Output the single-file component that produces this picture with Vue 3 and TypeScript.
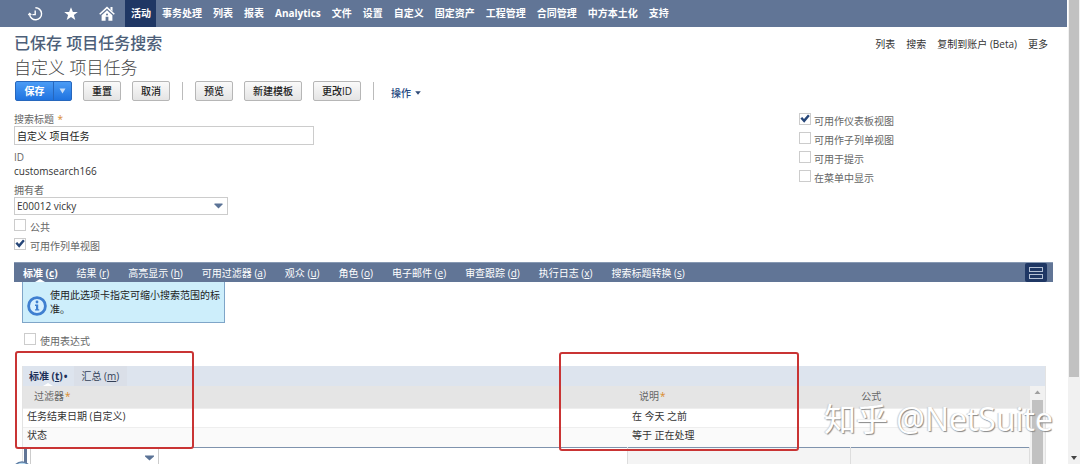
<script setup lang="ts">
import { ref } from 'vue'

interface Flag { id: string; label: string; checked: boolean }
interface Tab { label: string; key: string }
interface Filter { name: string; description: string; formula: string }

const menu: string[] = ['活动', '事务处理', '列表', '报表', 'Analytics', '文件', '设置', '自定义', '固定资产', '工程管理', '合同管理', '中方本土化', '支持']
const activeMenu = ref('活动')
const pageLinks: string[] = ['列表', '搜索', '复制到账户 (Beta)', '更多']

const title = ref('自定义 项目任务')
const owner = ref('E00012 vicky')
const newFilter = ref('')

const leftFlags = ref<Flag[]>([
  { id: 'public', label: '公共', checked: false },
  { id: 'listview', label: '可用作列单视图', checked: true },
])
const rightFlags = ref<Flag[]>([
  { id: 'dashboard', label: '可用作仪表板视图', checked: true },
  { id: 'sublist', label: '可用作子列单视图', checked: false },
  { id: 'reminder', label: '可用于提示', checked: false },
  { id: 'inmenu', label: '在菜单中显示', checked: false },
])
const useExpression = ref(false)

const tabs: Tab[] = [
  { label: '标准', key: 'c' },
  { label: '结果', key: 'r' },
  { label: '高亮显示', key: 'h' },
  { label: '可用过滤器', key: 'a' },
  { label: '观众', key: 'u' },
  { label: '角色', key: 'o' },
  { label: '电子邮件', key: 'e' },
  { label: '审查跟踪', key: 'd' },
  { label: '执行日志', key: 'x' },
  { label: '搜索标题转换', key: 's' },
]
const activeTab = ref('c')

const filters: Filter[] = [
  { name: '任务结束日期 (自定义)', description: '在 今天 之前', formula: '' },
  { name: '状态', description: '等于 正在处理', formula: '' },
]
</script>

<template>
  <div class="shell">
    <main class="page">
      <nav class="menubar">
        <a class="menu-icon" href="#" aria-label="recent">
          <svg width="16" height="16" viewBox="0 0 16 16" fill="none" stroke="#fff" stroke-width="1.4">
            <path d="M8.4 1.8A6 6 0 1 1 2.6 8.4" />
            <path d="M8.2 4.4V8.6H5.4" />
            <path d="M1.4 9.2L2.6 7.4L4.4 8.8" />
          </svg>
        </a>
        <a class="menu-icon" href="#" aria-label="favorites">
          <svg width="16" height="16" viewBox="0 0 16 16" fill="#fff">
            <path d="M8 1.2L9.9 6H14.8L10.9 9.1L12.3 14L8 11.1L3.7 14L5.1 9.1L1.2 6H6.1Z" />
          </svg>
        </a>
        <a class="menu-icon" href="#" aria-label="home">
          <svg width="16" height="16" viewBox="0 0 16 16">
            <path d="M0.7 8.2L8 1.6L15.3 8.2" fill="none" stroke="#fff" stroke-width="1.5" />
            <path d="M11.5 1H13.5V5.4L11.5 3.6Z" fill="#fff" />
            <path d="M2.6 9.2L8 4.3L13.4 9.2V14.8H9.4V10.8H6.6V14.8H2.6Z" fill="#fff" />
            <circle cx="8" cy="8.4" r="1" fill="#617596" />
          </svg>
        </a>
        <a
          v-for="m in menu"
          :key="m"
          href="#"
          class="menu-item"
          :class="{ active: m === activeMenu }"
          @click.prevent="activeMenu = m"
        >{{ m }}</a>
      </nav>

      <header class="heading">
        <div>
          <h1>已保存 项目任务搜索</h1>
          <h2>自定义 项目任务</h2>
        </div>
        <div class="page-links">
          <a v-for="l in pageLinks" :key="l" href="#">{{ l }}</a>
        </div>
      </header>

      <div class="toolbar">
        <div class="split">
          <button type="button" class="save">保存</button>
          <button type="button" class="save-more" aria-label="more">
            <svg width="7" height="6" viewBox="0 0 7 6"><path d="M0.5 0.5H6.5L3.5 5.5Z" fill="#c6ddf8" /></svg>
          </button>
        </div>
        <button type="button" class="btn">重置</button>
        <button type="button" class="btn">取消</button>
        <span class="divider"></span>
        <button type="button" class="btn">预览</button>
        <button type="button" class="btn">新建模板</button>
        <button type="button" class="btn">更改ID</button>
        <span class="divider"></span>
        <button type="button" class="actions">
          操作
          <svg width="6" height="4" viewBox="0 0 6 4"><path d="M0.2 0.3H5.8L3 3.8Z" fill="#2f4b78" /></svg>
        </button>
      </div>

      <section class="form">
        <div class="col">
          <label class="caption" for="title">搜索标题 <span class="req">*</span></label>
          <input id="title" v-model="title" class="text-input" type="text">
          <span class="caption id-caption">ID</span>
          <span class="value">customsearch166</span>
          <label class="caption" for="owner">拥有者</label>
          <div class="select-box">
            <select id="owner" v-model="owner">
              <option>E00012 vicky</option>
            </select>
            <svg class="caret" width="9" height="6" viewBox="0 0 9 6"><path d="M0.5 0.5H8.5V1.5L4.5 5.5L0.5 1.5Z" fill="#5b7396" /></svg>
          </div>
          <div class="left-flags">
            <div v-for="f in leftFlags" :key="f.id" class="flag">
              <input :id="f.id" v-model="f.checked" type="checkbox">
              <label :for="f.id">{{ f.label }}</label>
            </div>
          </div>
        </div>
        <div class="col">
          <div v-for="f in rightFlags" :key="f.id" class="flag">
            <input :id="f.id" v-model="f.checked" type="checkbox">
            <label :for="f.id">{{ f.label }}</label>
          </div>
        </div>
      </section>

      <div class="tabbar">
        <button
          v-for="t in tabs"
          :key="t.key"
          type="button"
          class="tab"
          :class="{ active: t.key === activeTab }"
          @click="activeTab = t.key"
        >{{ t.label }} (<u>{{ t.key }}</u>)</button>
        <button type="button" class="layout-btn" aria-label="layout">
          <svg width="14" height="12" viewBox="0 0 14 12" fill="none" stroke="#b4c0d4" stroke-width="1">
            <rect x="0.5" y="0.5" width="13" height="4" />
            <rect x="0.5" y="7.5" width="13" height="4" />
          </svg>
        </button>
      </div>

      <section class="criteria">
        <div class="hint">
          <svg width="20" height="20" viewBox="0 0 20 20">
            <circle cx="10" cy="10" r="8.4" fill="#d6efff" stroke="#3f7fd0" stroke-width="2.8" />
            <circle cx="10" cy="6" r="1.4" fill="#3f7fd0" />
            <path d="M8 8.6H11.2V13.2H12.2V14.6H8V13.2H9V10H8Z" fill="#3f7fd0" />
          </svg>
          <p>使用此选项卡指定可缩小搜索范围的标准。</p>
        </div>
        <div class="flag expr">
          <input id="expr" v-model="useExpression" type="checkbox">
          <label for="expr">使用表达式</label>
        </div>

        <div class="panel">
          <div class="subtabs">
            <button type="button" class="subtab active">标准 (<u>t</u>)<span class="dot">•</span></button>
            <button type="button" class="subtab">汇总 (<u>m</u>)</button>
          </div>
          <div class="grid-area">
            <table>
              <colgroup>
                <col class="c-name">
                <col class="c-desc">
                <col>
              </colgroup>
              <thead>
                <tr>
                  <th>过滤器<span class="req">*</span></th>
                  <th>说明<span class="req">*</span></th>
                  <th>公式</th>
                </tr>
              </thead>
              <tbody>
                <tr v-for="f in filters" :key="f.name">
                  <td>{{ f.name }}</td>
                  <td>{{ f.description }}</td>
                  <td>{{ f.formula }}</td>
                </tr>
                <tr class="edit">
                  <td>
                    <div class="select-box new-filter">
                      <select v-model="newFilter" aria-label="过滤器">
                        <option value=""></option>
                      </select>
                      <svg class="caret" width="9" height="6" viewBox="0 0 9 6"><path d="M0 0.5H9V1.5L4.5 5.5L0 1.5Z" fill="#5b7396" /></svg>
                    </div>
                    <svg class="row-handle" width="20" height="20" viewBox="0 0 20 20"><circle cx="10" cy="10" r="9" fill="#b9dcf2" stroke="#5f7da3" stroke-width="1.5" /></svg>
                  </td>
                  <td></td>
                  <td></td>
                </tr>
              </tbody>
            </table>
            <div class="grid-scroll">
              <svg width="7" height="4" viewBox="0 0 7 4"><path d="M0.5 4L3.5 0.5L6.5 4Z" fill="#a0a0a0" /></svg>
              <div class="grid-thumb"></div>
            </div>
          </div>
        </div>
        <div class="mark mark-left"></div>
        <div class="mark mark-right"></div>
        <div class="watermark">知乎 @NetSuite</div>
      </section>
    </main>

    <div class="scrollbar">
      <div class="thumb"></div>
      <svg width="6" height="4" viewBox="0 0 6 4"><path d="M0 0H6L3 4Z" fill="#444" /></svg>
    </div>
  </div>
</template>

<style>
body {
  margin: 0;
  background: #fff;
}
</style>

<style scoped>
.shell {
  display: flex;
  height: 100vh;
  overflow: hidden;
  font-family: "Open Sans", "Noto Sans CJK SC", sans-serif;
  font-size: 10px;
  line-height: 14px;
  color: #333;
}
.shell * {
  box-sizing: border-box;
}
button, input, select {
  font: inherit;
  margin: 0;
}
button {
  padding: 0;
  border: 0;
  background: none;
  white-space: nowrap;
}
a {
  color: inherit;
  text-decoration: none;
}
svg {
  display: block;
}
.page {
  flex: 1;
  min-width: 0;
}
.scrollbar {
  flex: 0 0 12px;
  display: flex;
  flex-direction: column;
  align-items: center;
  justify-content: space-between;
  padding-bottom: 4px;
  background: #f1f1f1;
}
.thumb {
  width: 10px;
  height: 82%;
  background: #c1c1c1;
}

.menubar {
  display: flex;
  height: 27px;
  margin-right: 1px;
  padding-left: 17px;
  background: #617596;
  color: #fff;
  font-weight: 700;
}
.menu-icon {
  display: flex;
  align-items: center;
  justify-content: center;
  width: 36px;
}
.menu-item {
  padding: 0 5px 0 6px;
  line-height: 26px;
  white-space: nowrap;
}
.menu-item.active {
  background: #1f3764;
}

.heading {
  display: flex;
  justify-content: space-between;
  padding: 4px 20px 0 14px;
}
h1, h2 {
  margin: 0;
}
h1 {
  font-size: 16px;
  line-height: 24px;
  font-weight: 500;
  color: #4d5f79;
}
h2 {
  font-size: 17px;
  line-height: 26px;
  font-weight: 300;
  color: #444;
}
.page-links {
  display: flex;
  gap: 11px;
  padding-top: 6px;
}

.toolbar {
  display: flex;
  align-items: center;
  gap: 11px;
  padding: 0 15px;
}
.btn {
  height: 20px;
  padding: 0 8px;
  border: 1px solid #b6b6b6;
  border-radius: 2px;
  background: linear-gradient(#fafafa, #e4e4e4);
  color: #222;
  font-weight: 500;
}
.split {
  display: flex;
  height: 20px;
  border: 1px solid #2767bd;
  border-radius: 2px;
  background: linear-gradient(#4a9bf5, #1f73e0);
}
.save {
  width: 37px;
  color: #fff;
  font-weight: 700;
}
.save-more {
  display: flex;
  align-items: center;
  justify-content: center;
  width: 18px;
  border-left: 1px solid #2767bd;
}
.divider {
  width: 1px;
  height: 18px;
  margin: 0 1px;
  background: #bbb;
}
.actions {
  display: flex;
  align-items: center;
  gap: 4px;
  padding: 4px 0 0 5px;
  color: #24477f;
  font-weight: 500;
}

.form {
  display: grid;
  grid-template-columns: 785fr 269fr;
  padding: 11px 0 6px 14px;
}
.col {
  display: flex;
  flex-direction: column;
  align-items: flex-start;
}
.caption {
  color: #666;
}
.req {
  margin-left: 1px;
  color: #d98b2b;
}
.text-input {
  width: 300px;
  height: 19px;
  padding: 0 2px;
  border: 1px solid #ccc;
  color: #222;
}
.id-caption {
  margin-top: 5px;
}
.value {
  margin-bottom: 5px;
}
.select-box {
  position: relative;
  width: 214px;
}
select {
  display: block;
  width: 100%;
  height: 18px;
  padding: 0 2px;
  border: 1px solid #ccc;
  border-radius: 0;
  appearance: none;
  background: #fff;
  color: #333;
}
.caret {
  position: absolute;
  right: 5px;
  top: 6px;
  pointer-events: none;
}
.left-flags {
  padding-top: 3px;
}
.left-flags .flag {
  gap: 4px;
}
.flag {
  display: flex;
  align-items: flex-start;
  gap: 3px;
  height: 19px;
  color: #666;
}
.flag label {
  padding-top: 2px;
}
input[type="checkbox"] {
  appearance: none;
  width: 12px;
  height: 12px;
  margin-top: 1px;
  border: 1px solid #ccc;
  background: #fff;
}
input[type="checkbox"]:checked::before {
  content: "";
  display: block;
  width: 10px;
  height: 10px;
  background: #274779;
  clip-path: polygon(4% 44%, 22% 30%, 40% 50%, 80% 6%, 98% 20%, 42% 88%);
}

.tabbar {
  display: flex;
  align-items: center;
  gap: 19px;
  height: 20px;
  margin: 0 15px 0 14px;
  padding: 0 6px 0 9px;
  border-top: 1px solid #8799b3;
  background: #617596;
}
.tab {
  position: relative;
  height: 100%;
  color: #fff;
}
.tab.active {
  font-weight: 700;
}
.tab.active::after,
.subtab.active::after {
  content: "";
  position: absolute;
  left: 50%;
  bottom: 0;
  margin-left: -5px;
  border: 5px solid transparent;
  border-top: 0;
  border-bottom: 3px solid #fff;
}
.layout-btn {
  display: flex;
  align-items: center;
  justify-content: center;
  width: 22px;
  height: 19px;
  margin-left: auto;
  border-radius: 2px;
  background: #1f3764;
}

.criteria {
  position: relative;
  padding: 0 22px;
}
.hint {
  display: flex;
  align-items: flex-start;
  gap: 3px;
  width: 203px;
  height: 41px;
  padding: 6px 2px 0 4px;
  border: 1px solid #7fa5c8;
  border-top: 0;
  background: #cdeefb;
  color: #222;
}
.hint svg {
  flex: none;
  margin-top: 8px;
}
.hint p {
  margin: 0;
}
.expr {
  padding: 9px 0 0 2px;
  height: 43px;
  gap: 4px;
}
.panel {
  border-right: 1px solid #e3e3e3;
  border-left: 1px solid #e3e3e3;
}
.subtabs {
  display: flex;
  height: 20px;
  background: #dde4ee;
  color: #333f57;
}
.subtab {
  position: relative;
  height: 100%;
  padding: 0 6px;
  color: inherit;
}
.subtab + .subtab {
  padding: 0 8px;
  background: #dadfe8;
}
.subtab.active {
  color: #1c3058;
  font-weight: 700;
}
.dot {
  margin-left: 1px;
}
.grid-area {
  display: flex;
}
table {
  flex: 1;
  border-collapse: collapse;
  table-layout: fixed;
}
.c-name {
  width: 60.1%;
}
.c-desc {
  width: 22.1%;
}
th {
  height: 22px;
  padding: 0 11px 2px;
  background: #e5e5e5;
  color: #666;
  font-weight: 400;
  text-align: left;
}
td {
  height: 19px;
  padding: 0 4px 4px;
  border-top: 1px solid #eee;
}
tbody tr:nth-child(2) td {
  height: 20px;
  background: #fafafa;
}
.edit td {
  position: relative;
  height: 24px;
  padding: 0 0 0 7px;
  border-top: 1px solid #7f93ad;
  border-right: 1px solid #ddd;
  background: #f4f4f4;
}
.edit td:first-child {
  background: linear-gradient(to right, #fff 1px, #617596 1px, #617596 4px, #fff 4px);
}
.new-filter {
  width: 129px;
}
.new-filter select {
  height: 24px;
  border-top: 0;
}
.new-filter .caret {
  top: 7px;
}
.row-handle {
  position: absolute;
  left: -11px;
  top: 13px;
}
.grid-scroll {
  display: flex;
  flex-direction: column;
  align-items: center;
  gap: 6px;
  width: 15px;
  padding-top: 4px;
  background: #f1f1f1;
}
.grid-thumb {
  flex: 1;
  width: 11px;
  background: #c1c1c1;
}
.mark {
  position: absolute;
  border: 2px solid #c93434;
  border-radius: 3px;
  pointer-events: none;
}
.mark-left {
  left: 15px;
  top: 69px;
  width: 179px;
  height: 98px;
}
.mark-right {
  left: 52.3%;
  top: 70px;
  width: 22.5%;
  height: 99px;
}
.watermark {
  position: absolute;
  right: 15px;
  top: 118px;
  font-size: 32px;
  line-height: 38px;
  white-space: nowrap;
  color: #fff;
  text-shadow: 1px 1px 1px #888, -1px 0 1px #ccc;
  pointer-events: none;
}
</style>
